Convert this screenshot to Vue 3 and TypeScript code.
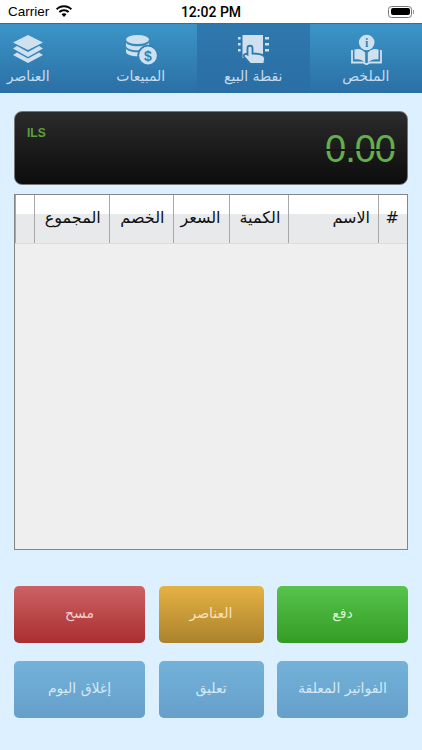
<script setup lang="ts">
const columns = [
  { label: '#', width: 29 },
  { label: 'الاسم', width: 90 },
  { label: 'الكمية', width: 60 },
  { label: 'السعر', width: 56 },
  { label: 'الخصم', width: 64 },
  { label: 'المجموع', width: 75 },
  { label: '', width: 19 },
]
const buttons = [
  { label: 'دفع', tone: 'green' },
  { label: 'العناصر', tone: 'amber' },
  { label: 'مسح', tone: 'red' },
  { label: 'الفواتير المعلقة', tone: 'blue' },
  { label: 'تعليق', tone: 'blue' },
  { label: 'إغلاق اليوم', tone: 'blue' },
]
</script>

<template>
  <div class="screen">
    <header class="status">
      <div class="status-left">
        <span>Carrier</span>
        <svg class="wifi" viewBox="0 0 18 13" width="18" height="13">
          <path d="M9 2.200c2.600 0 5 1 6.800 2.700l1.200-1.300C14.900 1.500 12.100.3 9 .3S3.100 1.500 1 3.600l1.200 1.300C4 3.200 6.400 2.200 9 2.200z" fill="#000"/>
          <path d="M9 6.200c1.500 0 2.900.6 4 1.600l1.300-1.300C12.900 5.100 11 4.300 9 4.300s-3.900.8-5.300 2.200L5 7.800c1.100-1 2.500-1.600 4-1.600z" fill="#000"/>
          <path d="M9 8.300c-1 0-1.800.4-2.500 1L9 12l2.500-2.700c-.7-.6-1.500-1-2.500-1z" fill="#000"/>
        </svg>
      </div>
      <span class="clock">12:02 PM</span>
      <div class="battery-wrap">
        <div class="battery"><span class="battery-fill"></span></div>
        <span class="battery-nub"></span>
      </div>
    </header>

    <nav class="tabs">
      <div class="tab">
        <svg class="tab-icon" viewBox="0 0 40 32" width="40" height="32">
          <circle cx="20.700" cy="9.500" r="7.800" fill="#cfe1ef"/>
          <text x="20.700" y="13.800" class="info">i</text>
          <path d="M8.500 16.500c4-1.300 8-.3 10.700 3.300v10c-3-3-6.700-4-10.700-3.300z" fill="#cfe1ef"/>
          <path d="M32.500 16.500c-4-1.300-8-.3-10.700 3.300v10c3-3 6.700-4 10.700-3.300z" fill="#cfe1ef"/>
          <path d="M6 17v12.500h11l3.500 1.800 3.500-1.800h11V17" fill="none" stroke="#cfe1ef" stroke-width="1.800"/>
        </svg>
        <span>الملخص</span>
      </div>
      <div class="tab active">
        <svg class="tab-icon" viewBox="0 0 40 32" width="40" height="32">
          <rect x="9.500" y="2" width="20.500" height="23" fill="#cfe1ef"/>
          <path d="M5 4h2.600v2.400H5zM5 10h2.600v2.400H5zM5 16h2.600v2.400H5zM32 4h4v2.400h-4zM32 10h4v2.400h-4zM32 16h4v2.400h-4z" fill="#cfe1ef"/>
          <path d="M14.500 15c0-3 5-3 5 0v5.500c3 0 6.500.3 9 1.200 2.300.8 3.500 2 3.500 4l-.8 5.300H17.500l-6.500-7.200c-1.200-1.800 1.300-3.800 3.500-2.300z" fill="#cfe1ef" stroke="#2e77ac" stroke-width="1.800"/>
        </svg>
        <span>نقطة البيع</span>
      </div>
      <div class="tab">
        <svg class="tab-icon" viewBox="0 0 40 32" width="40" height="32">
          <ellipse cx="16.500" cy="6.500" rx="11.500" ry="4.500" fill="#cfe1ef"/>
          <path d="M5 9.500v3.300c0 2.500 5 4.500 11.500 4.500S28 15.300 28 12.800V9.500c-1.500 2.500-6 3.800-11.500 3.800S6.500 12 5 9.500z" fill="#cfe1ef"/>
          <path d="M5 15.500v3.300c0 2.500 5 4.500 11.500 4.500S28 21.300 28 18.800v-3.300c-1.500 2.500-6 3.800-11.500 3.800S6.500 18 5 15.500z" fill="#cfe1ef"/>
          <circle cx="27" cy="22.500" r="9.800" fill="#cfe1ef" stroke="#3583b6" stroke-width="1.800"/>
          <text x="27" y="27.500" class="dollar">$</text>
        </svg>
        <span>المبيعات</span>
      </div>
      <div class="tab">
        <svg class="tab-icon" viewBox="0 0 40 32" width="40" height="32">
          <path d="M20 2l15 7.500L20 17 5 9.500z" fill="#cfe1ef"/>
          <path d="M9 13l-4 2.500L20 24l15-8.500-4-2.500-11 6z" fill="#cfe1ef"/>
          <path d="M9 19.500L5 22l15 8 15-8-4-2.500-11 6z" fill="#cfe1ef"/>
        </svg>
        <span>العناصر</span>
      </div>
    </nav>

    <main class="content">
      <section class="display">
        <span class="currency">ILS</span>
        <span class="amount">0.00</span>
      </section>

      <section class="table">
        <div class="thead">
          <div v-for="c in columns" :key="c.width" class="th" :style="{ width: c.width + 'px' }">{{ c.label }}</div>
        </div>
      </section>

      <section class="actions">
        <button v-for="b in buttons" :key="b.label" class="action" :class="b.tone">{{ b.label }}</button>
      </section>
    </main>
  </div>
</template>

<style scoped>
.screen {
  width: 422px;
  height: 750px;
  overflow: hidden;
  display: flex;
  flex-direction: column;
  background: #dcf0ff;
  font-family: "DejaVu Sans", sans-serif;
}
.status {
  height: 23px;
  background: #fff;
  display: grid;
  grid-template-columns: 1fr auto 1fr;
  align-items: center;
  padding: 0 8px;
  font-family: "Liberation Sans", sans-serif;
  font-size: 13.500px;
  color: #000;
  box-sizing: border-box;
}
.status-left { display: flex; align-items: center; gap: 6px; }
.clock { font-family: Roboto, sans-serif; font-size: 14px; font-weight: 500; }
.battery-wrap { justify-self: end; display: flex; align-items: center; gap: 1px; }
.battery {
  width: 24px; height: 12px; border: 1px solid #777; border-radius: 3.500px;
  padding: 1.500px; box-sizing: border-box;
}
.battery-fill { display: block; height: 100%; background: #000; border-radius: 2px; }
.battery-nub { width: 1px; height: 4px; background: #999; }
.tabs {
  direction: rtl;
  height: 70px;
  display: flex;
  overflow: hidden;
  background: linear-gradient(#3c95c7, #2a6fa5);
  border-top: 1px solid #2d6f9f;
  box-sizing: border-box;
}
.tab {
  flex: 0 0 112.500px;
  display: flex;
  flex-direction: column;
  align-items: center;
  padding-top: 9px;
  box-sizing: border-box;
  color: #c5dcec;
  font-size: 14px;
  line-height: 18px;
}
.tab.active { background: linear-gradient(#2f78ad, #2a6ea5); }
.tab-icon { display: block; margin-bottom: 2px; flex: none; }
.info { font: bold 12px "Liberation Serif", serif; fill: #3583b6; text-anchor: middle; }
.dollar { font: bold 14px "Liberation Sans", sans-serif; fill: #3583b6; text-anchor: middle; }
.content {
  flex: 1;
  display: flex;
  flex-direction: column;
  padding: 18px 14px 0;
}
.display {
  height: 74px;
  border-radius: 8px;
  background: linear-gradient(#2b2b2b, #0c0c0c);
  border: 1px solid #777;
  box-sizing: border-box;
  display: flex;
  justify-content: space-between;
  padding: 14px 12px;
}
.currency { font: bold 12px "Liberation Sans", sans-serif; color: #5ea03f; }
.amount {
  position: relative;
  font: 38px "Liberation Sans", sans-serif;
  color: #64ae4c;
  align-self: flex-end;
  line-height: 36px;
  letter-spacing: -1px;
  margin-bottom: 3px;
}
.amount::after {
  content: "";
  position: absolute;
  left: 0;
  right: 0;
  top: 50%;
  height: 1.500px;
  background: #171717;
}
.table {
  margin-top: 9px;
  height: 356px;
  border: 1px solid #858585;
  background: #efefef;
  box-sizing: border-box;
}
.thead {
  direction: rtl;
  height: 49px;
  display: flex;
  background: linear-gradient(#fff 0, #fff 19px, #e8e9eb 19px);
  border-bottom: 1px solid #dcdcdc;
  box-sizing: border-box;
}
.th {
  box-sizing: border-box;
  border-left: 1px solid #a8a8a8;
  padding: 13px 8px 0;
  font-size: 16px;
  color: #111;
}
.actions {
  margin-top: 36px;
  direction: rtl;
  display: grid;
  grid-template-columns: 131px 105px 131px;
  grid-auto-rows: 57px;
  column-gap: 13.500px;
  row-gap: 18px;
}
.action {
  border: 0;
  border-radius: 5px;
  font-family: "DejaVu Sans", sans-serif;
  font-size: 14px;
  padding: 0 0 4px;
}
.green { background: linear-gradient(#57c44d, #339c24); color: #d9f4d3; }
.amber { background: linear-gradient(#e5b244, #ab822c); color: #f7e3b8; }
.red { background: linear-gradient(#cb6264, #aa2e2f); color: #f6cfd0; }
.blue { background: linear-gradient(#74b2d9, #659fca); color: #d3e9f6; }
</style>
